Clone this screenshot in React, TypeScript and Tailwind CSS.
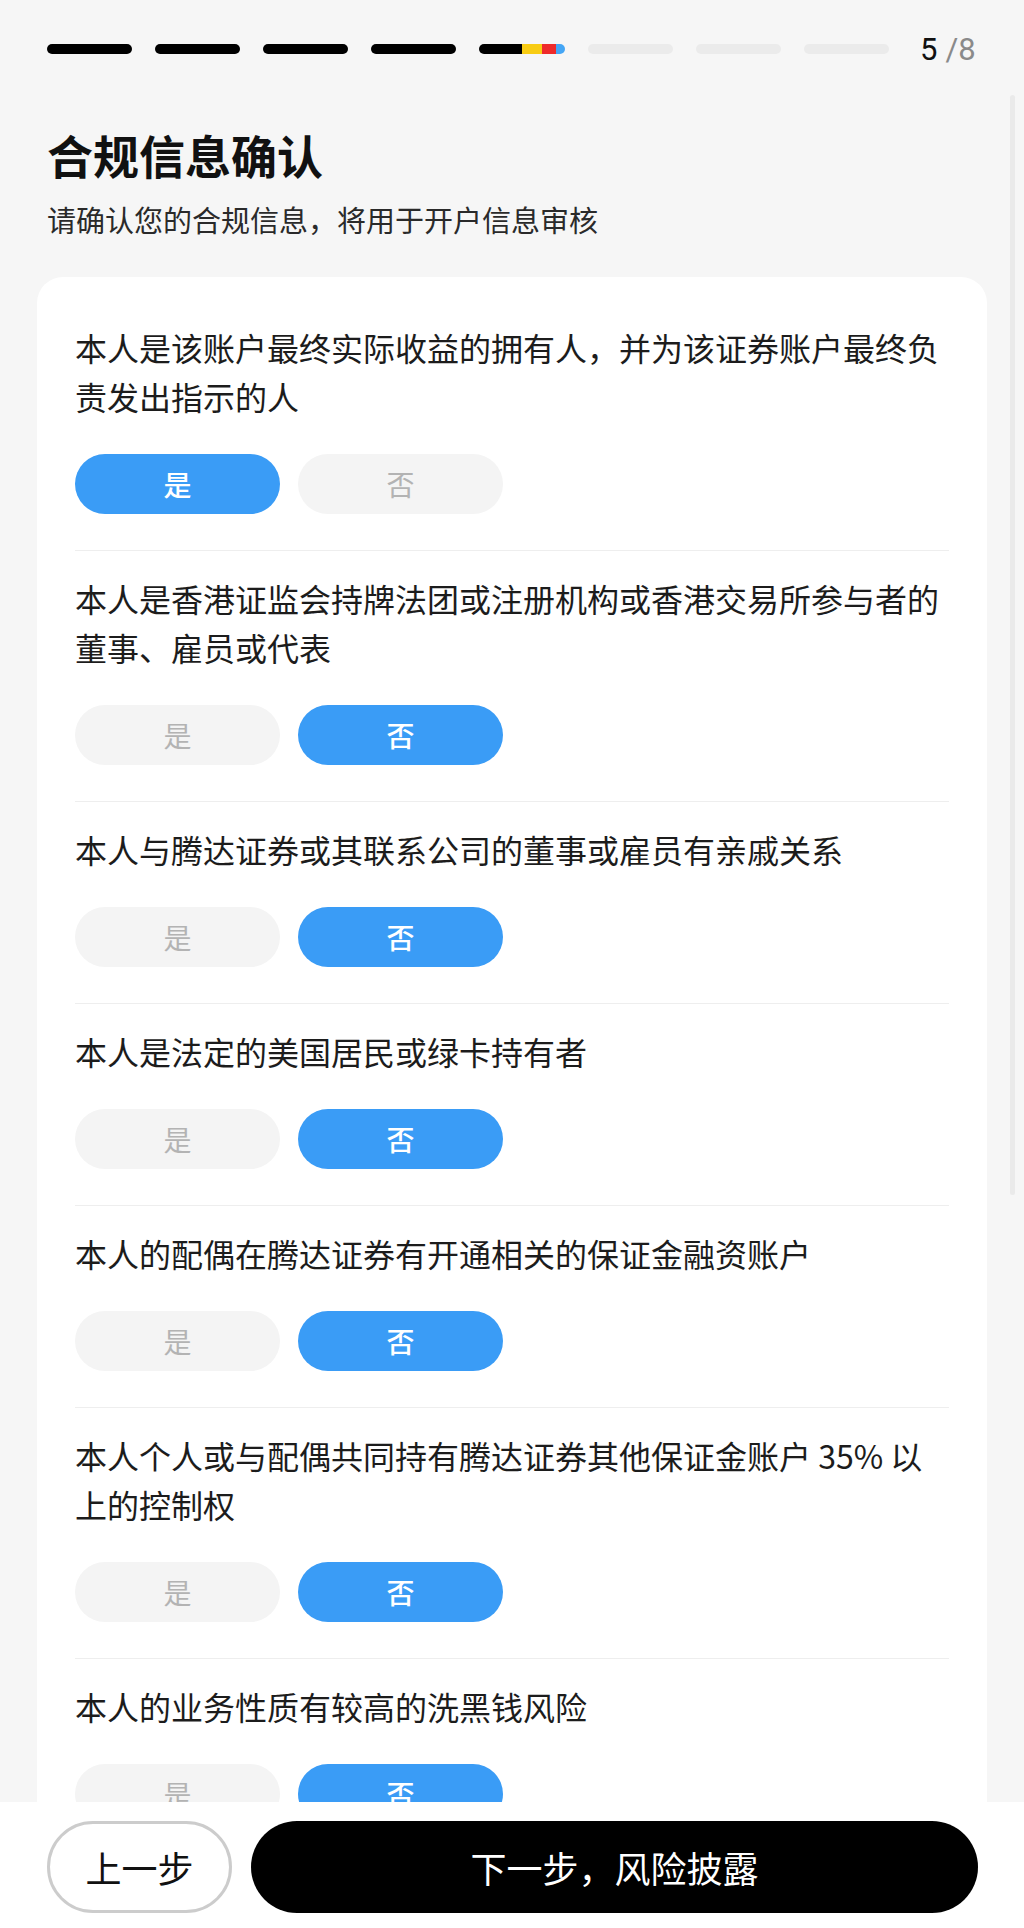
import React from "react";

type Question = {
  lines: string[];
  answer: "yes" | "no";
};

const questions: Question[] = [
  {
    lines: ["本人是该账户最终实际收益的拥有人，并为该证券账户最终负", "责发出指示的人"],
    answer: "yes",
  },
  {
    lines: ["本人是香港证监会持牌法团或注册机构或香港交易所参与者的", "董事、雇员或代表"],
    answer: "no",
  },
  { lines: ["本人与腾达证券或其联系公司的董事或雇员有亲戚关系"], answer: "no" },
  { lines: ["本人是法定的美国居民或绿卡持有者"], answer: "no" },
  { lines: ["本人的配偶在腾达证券有开通相关的保证金融资账户"], answer: "no" },
  {
    lines: ["本人个人或与配偶共同持有腾达证券其他保证金账户 35% 以", "上的控制权"],
    answer: "no",
  },
  { lines: ["本人的业务性质有较高的洗黑钱风险"], answer: "no" },
];

const ProgressHeader = () => (
  <div className="flex h-[32px] items-center pl-[47px] mt-[33px]">
    <div className="flex gap-[23px]">
      {[0, 1, 2, 3].map((i) => (
        <div key={i} className="h-[10px] w-[85px] rounded-full bg-black" />
      ))}
      <div className="flex h-[10px] w-[86px] overflow-hidden rounded-full">
        <div className="w-[43px] bg-black" />
        <div className="w-[20px] bg-[#f8cc14]" />
        <div className="w-[14px] bg-[#ee2b2b]" />
        <div className="w-[9px] bg-[#45a6f5]" />
      </div>
      {[0, 1, 2].map((i) => (
        <div key={i} className="h-[10px] w-[85px] rounded-full bg-[#ebebeb]" />
      ))}
    </div>
    <div className="ml-[31px] font-['Roboto',sans-serif] text-[31px] leading-none">
      <span className="text-[#111]">5</span>
      <span className="ml-[8px] text-[#8a8a8a]">/8</span>
    </div>
  </div>
);

const ChoiceButton = ({ label, active }: { label: string; active: boolean }) => (
  <button
    className={
      active
        ? "flex h-[60px] w-[205px] items-center justify-center rounded-full bg-[#3a9cf6] text-[28px] font-medium text-white"
        : "flex h-[60px] w-[205px] items-center justify-center rounded-full bg-[#f4f4f4] text-[28px] text-[#b3b3b3]"
    }
  >
    {label}
  </button>
);

const QuestionItem = ({ q, first }: { q: Question; first: boolean }) => (
  <div className={first ? "border-b border-[#eeeeee] pt-[46px] pb-[36px]" : "border-b border-[#eeeeee] pt-[23px] pb-[36px]"}>
    <div className="text-[32px] leading-[49px] text-[#1c1c1c]">
      {q.lines.map((l) => (
        <div key={l} className="whitespace-nowrap">
          {l}
        </div>
      ))}
    </div>
    <div className="mt-[33px] flex gap-[18px]">
      <ChoiceButton label="是" active={q.answer === "yes"} />
      <ChoiceButton label="否" active={q.answer === "no"} />
    </div>
  </div>
);

export default function App() {
  return (
    <div className="relative flex h-[1928px] w-[1024px] flex-col overflow-hidden bg-[#f6f6f6] font-['Noto_Sans_CJK_SC','Noto_Sans',sans-serif]">
      <div className="min-h-0 flex-1 overflow-hidden">
        <ProgressHeader />

        <h1 className="ml-[47px] mt-[61px] text-[46px] font-bold leading-[56px] text-[#111]">合规信息确认</h1>
        <p className="ml-[47px] mt-[17px] text-[29px] leading-[40px] text-[#2a2a2a]">
          请确认您的合规信息，将用于开户信息审核
        </p>

        <div className="mx-[37px] mt-[38px] rounded-[26px] bg-white px-[38px]">
          {questions.map((q, i) => (
            <QuestionItem key={i} q={q} first={i === 0} />
          ))}
        </div>
      </div>

      <div className="flex h-[126px] shrink-0 gap-[19px] bg-white pl-[47px] pr-[46px] pt-[19px]">
        <button className="flex h-[92px] w-[185px] items-center justify-center rounded-full border-[3px] border-[#cccccc] bg-white text-[36px] text-[#111]">
          上一步
        </button>
        <button className="flex h-[92px] flex-1 items-center justify-center rounded-full bg-black text-[36px] text-white">
          下一步，风险披露
        </button>
      </div>

      <div className="absolute left-[1010px] top-[95px] h-[1100px] w-[5px] rounded-full bg-[#eaeaea]" />
    </div>
  );
}
